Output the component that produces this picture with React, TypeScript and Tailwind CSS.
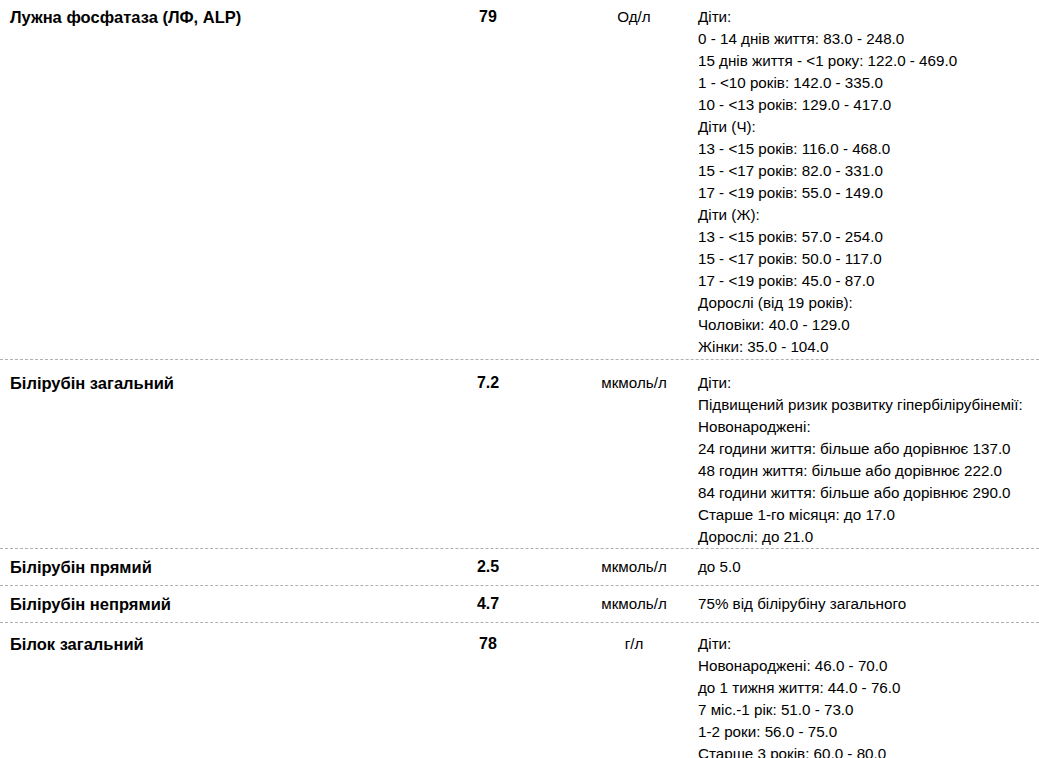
const rows = [
  {
    name: "Лужна фосфатаза (ЛФ, ALP)",
    value: "79",
    unit: "Од/л",
    pad: "pt-[6px] pb-[1px]",
    lines: [
      "Діти:",
      "0 - 14 днів життя: 83.0 - 248.0",
      "15 днів життя - <1 року: 122.0 - 469.0",
      "1 - <10 років: 142.0 - 335.0",
      "10 - <13 років: 129.0 - 417.0",
      "Діти (Ч):",
      "13 - <15 років: 116.0 - 468.0",
      "15 - <17 років: 82.0 - 331.0",
      "17 - <19 років: 55.0 - 149.0",
      "Діти (Ж):",
      "13 - <15 років: 57.0 - 254.0",
      "15 - <17 років: 50.0 - 117.0",
      "17 - <19 років: 45.0 - 87.0",
      "Дорослі (від 19 років):",
      "Чоловіки: 40.0 - 129.0",
      "Жінки: 35.0 - 104.0",
    ],
  },
  {
    name: "Білірубін загальний",
    value: "7.2",
    unit: "мкмоль/л",
    pad: "border-t pt-[12px] pb-0",
    lines: [
      "Діти:",
      "Підвищений ризик розвитку гіпербілірубінемії:",
      "Новонароджені:",
      "24 години життя: більше або дорівнює 137.0",
      "48 годин життя: більше або дорівнює 222.0",
      "84 години життя: більше або дорівнює 290.0",
      "Старше 1-го місяця: до 17.0",
      "Дорослі: до 21.0",
    ],
  },
  {
    name: "Білірубін прямий",
    value: "2.5",
    unit: "мкмоль/л",
    pad: "border-t pt-[7px] pb-[7px]",
    lines: ["до 5.0"],
  },
  {
    name: "Білірубін непрямий",
    value: "4.7",
    unit: "мкмоль/л",
    pad: "border-t pt-[7px] pb-[7px]",
    lines: ["75% від білірубіну загального"],
  },
  {
    name: "Білок загальний",
    value: "78",
    unit: "г/л",
    pad: "border-t pt-[10px] pb-0",
    lines: [
      "Діти:",
      "Новонароджені: 46.0 - 70.0",
      "до 1 тижня життя: 44.0 - 76.0",
      "7 міс.-1 рік: 51.0 - 73.0",
      "1-2 роки: 56.0 - 75.0",
      "Старше 3 років: 60.0 - 80.0",
      "Дорослі: 64.0 - 83.0",
    ],
  },
];

export default function App() {
  return (
    <div className="h-[758px] overflow-hidden bg-white text-black font-['Liberation_Sans',Arial,sans-serif]">
      {rows.map((row) => (
        <div key={row.name} className={`flex border-dashed border-[#b0b0b0] ${row.pad}`}>
          <div className="w-[420px] shrink-0 pl-[10px] text-[16.5px] font-bold leading-[22px]">{row.name}</div>
          <div className="w-[136px] shrink-0 text-center text-[16px] font-bold leading-[22px]">{row.value}</div>
          <div className="ml-[24px] w-[108px] shrink-0 text-center text-[15.2px] leading-[22px]">{row.unit}</div>
          <div className="min-w-0 flex-1 overflow-hidden whitespace-nowrap pl-[10px] text-[15.2px] leading-[22px]">
            {row.lines.map((line, i) => (
              <div key={i}>{line}</div>
            ))}
          </div>
        </div>
      ))}
    </div>
  );
}
